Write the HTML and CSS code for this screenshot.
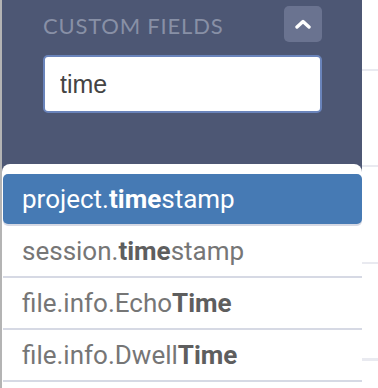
FILE: index.html
```html
<!DOCTYPE html>
<html>
<head>
    <meta charset="UTF-8">
    <title>Custom fields</title>
    <link rel="stylesheet" href="styles.css">
</head>
<body>
    <div class="page">
        <div class="panel">
            <div class="panel-head">
                <div class="head-row">
                    <span class="head-title">Custom Fields</span>
                    <button class="collapse-btn">
                        <svg width="18" height="10" viewBox="0 0 18 10">
                            <path d="M3 8 L9 2.6 L15 8" fill="none" stroke="#fff" stroke-width="3.4" stroke-linecap="round" stroke-linejoin="round"/>
                        </svg>
                    </button>
                </div>
                <input type="text" class="search" value="time">
            </div>

            <ul class="results">
                <li class="result active">project.<b>time</b>stamp</li>
                <li class="result">session.<b>time</b>stamp</li>
                <li class="result">file.info.Echo<b>Time</b></li>
                <li class="result">file.info.Dwell<b>Time</b></li>
            </ul>
        </div>
    </div>
</body>
</html>
```

FILE: styles.css
```css
html, body {
    margin: 0;
    padding: 0;
}

body {
    width: 378px;
    height: 388px;
    overflow: hidden;
    background: #fff;
    background-image: repeating-linear-gradient(to bottom,
        transparent 0, transparent 69px,
        #e9eaf0 69px, #e9eaf0 71px,
        transparent 71px, transparent 96.5px);
    font-family: Roboto, 'Liberation Sans', Arial, sans-serif;
}

.page {
    height: 388px;
    border-left: 2px solid #b4b4b4;
}

.panel {
    width: 360px;
    height: 388px;
    background: #4d5774;
    display: flex;
    flex-direction: column;
}

.panel-head {
    padding: 6px 40px 0 41px;
    height: 164px;
    box-sizing: border-box;
}

.head-row {
    display: flex;
    align-items: center;
    justify-content: space-between;
    height: 36px;
}

.head-title {
    font-family: Lato, 'Open Sans', sans-serif;
    text-transform: uppercase;
    font-size: 22px;
    letter-spacing: 0.8px;
    color: #8890a6;
    padding-top: 2px;
}

.collapse-btn {
    width: 38px;
    height: 36px;
    border: none;
    border-radius: 5px;
    background: #6a7390;
    display: flex;
    align-items: center;
    justify-content: center;
    padding: 0;
}

.search {
    display: block;
    margin-top: 13px;
    width: 279px;
    height: 58px;
    box-sizing: border-box;
    border: 2px solid #6a84bb;
    border-radius: 5px;
    padding: 0 15px;
    font-family: 'Liberation Sans', Arial, sans-serif;
    font-size: 25px;
    color: #444;
    background: #fff;
    outline: none;
}

.results {
    list-style: none;
    margin: 0;
    padding: 10px 0 0 1px;
    flex: 1;
    background: #fff;
    border-radius: 8px 8px 0 0;
}

.result {
    height: 50px;
    display: flex;
    align-items: center;
    padding-left: 19px;
    font-size: 26px;
    color: #767676;
    border-bottom: 2px solid #d6d9e4;
}

.result b {
    font-weight: 700;
    color: #5e5e5e;
}

.result.active {
    background: #467ab4;
    color: #fff;
    border-radius: 5px;
    border-bottom: none;
    box-shadow: 0 2px 0 #d6d9e4;
    margin-bottom: 2px;
}

.result.active b {
    color: #fff;
}
```
